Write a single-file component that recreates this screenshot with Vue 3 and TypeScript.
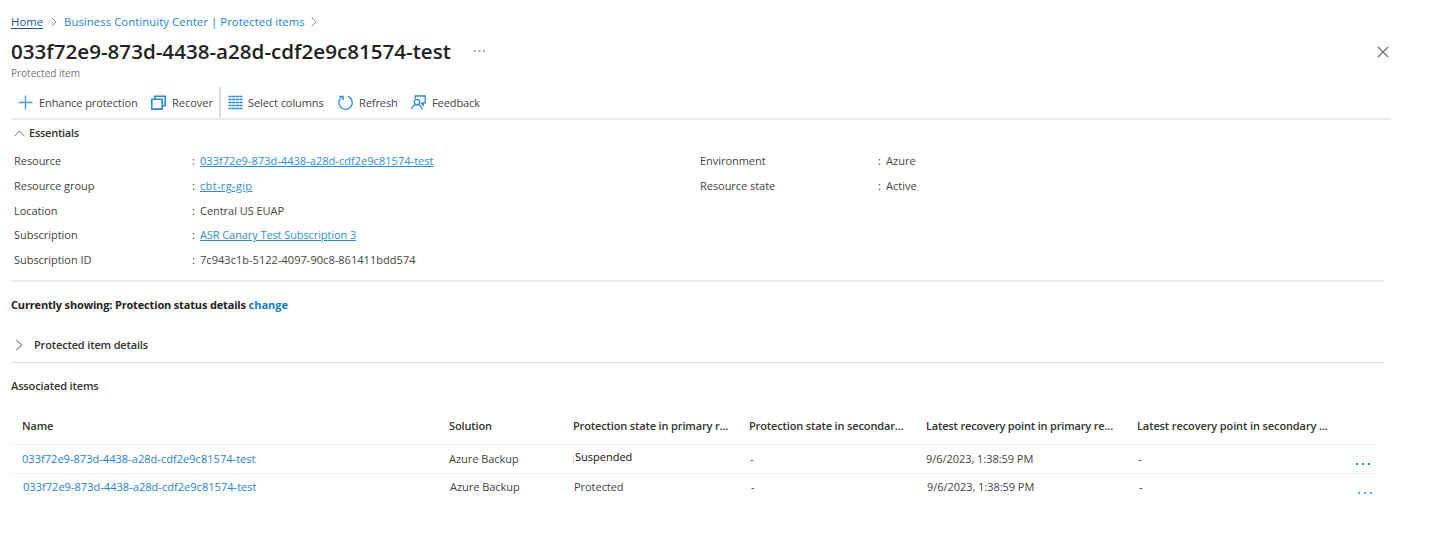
<script setup lang="ts">
interface Field {
  label: string
  value: string
  kind: string
}

interface Item {
  name: string
  solution: string
  state: string
  stateKind: string
  secondary: string
  latest: string
  latestSecondary: string
}

const resourceName = '033f72e9-873d-4438-a28d-cdf2e9c81574-test'

const leftFields: Field[] = [
  { label: 'Resource', value: resourceName, kind: 'link guid' },
  { label: 'Resource group', value: 'cbt-rg-gip', kind: 'link group' },
  { label: 'Location', value: 'Central US EUAP', kind: 'location' },
  { label: 'Subscription', value: 'ASR Canary Test Subscription 3', kind: 'link subscription' },
  { label: 'Subscription ID', value: '7c943c1b-5122-4097-90c8-861411bdd574', kind: 'guid' },
]

const rightFields: Field[] = [
  { label: 'Environment', value: 'Azure', kind: '' },
  { label: 'Resource state', value: 'Active', kind: '' },
]

const items: Item[] = [
  { name: resourceName, solution: 'Azure Backup', state: 'Suspended', stateKind: 'suspended', secondary: '-', latest: '9/6/2023, 1:38:59 PM', latestSecondary: '-' },
  { name: resourceName, solution: 'Azure Backup', state: 'Protected', stateKind: '', secondary: '-', latest: '9/6/2023, 1:38:59 PM', latestSecondary: '-' },
]
</script>

<template>
  <main class="page">
    <nav class="crumbs">
      <a class="home">Home</a>
      <svg class="sep" viewBox="0 0 6 10"><path d="M.8.8 5 5 .8 9.2" /></svg>
      <a class="crumb">Business Continuity Center | Protected items</a>
      <svg class="sep last" viewBox="0 0 6 10"><path d="M.8.8 5 5 .8 9.2" /></svg>
    </nav>

    <header class="head">
      <h1>{{ resourceName }}</h1>
      <svg class="more" viewBox="0 0 11 2"><path d="M0 0h2v2H0zM4.5 0h2v2h-2zM9 0h2v2H9z" /></svg>
      <svg class="close" viewBox="0 0 12 12"><path d="M1 1l10 10M11 1 1 11" /></svg>
    </header>
    <p class="subtitle">Protected item</p>

    <div class="toolbar">
      <button class="tool enhance">
        <svg class="icon" viewBox="0 0 15 15"><path class="plus" d="M7.5.5v14M.5 7.5h14" /></svg>
        <span>Enhance protection</span>
      </button>
      <button class="tool recover">
        <svg class="icon" viewBox="0 0 15 15"><path class="bold" d="M3.8 3.8V1.2h10.4v9.6h-2.7M.8 4.2h10.4v9.9H.8z" /></svg>
        <span>Recover</span>
      </button>
      <i class="divider"></i>
      <button class="tool columns">
        <svg class="icon" viewBox="0 0 15 15">
          <path class="rows" d="M.5 1.5h14M.5 4.5h14M.5 7.5h14M.5 10.5h14M.5 13.5h14" />
        </svg>
        <span>Select columns</span>
      </button>
      <button class="tool refresh">
        <svg class="icon" viewBox="0 0 15 15"><path d="M1.2 1.3h3.9v3.8M4.9 1.5A6.7 6.7 0 1 0 10 1.4" /></svg>
        <span>Refresh</span>
      </button>
      <button class="tool feedback">
        <svg class="icon" viewBox="0 0 15 15">
          <path d="M4.2 3.8V1h10v6.8h-1.8v2.3L9.9 7.8" />
          <circle cx="6" cy="7" r="2.7" />
          <path d="M.8 14.4c.3-3.1 2.3-4.7 5.2-4.7s4.7 1.7 5.1 4.7" />
        </svg>
        <span>Feedback</span>
      </button>
    </div>

    <section class="essentials">
      <h2><svg viewBox="0 0 11 7"><path d="M.6 6.2 5.5 1l4.9 5.2" /></svg><span>Essentials</span></h2>
      <div class="fields">
        <dl>
          <div v-for="f in leftFields" :key="f.label" class="field">
            <dt>{{ f.label }}</dt>
            <dd><i>:</i><span :class="f.kind">{{ f.value }}</span></dd>
          </div>
        </dl>
        <dl>
          <div v-for="f in rightFields" :key="f.label" class="field">
            <dt>{{ f.label }}</dt>
            <dd><i>:</i><span :class="f.kind">{{ f.value }}</span></dd>
          </div>
        </dl>
      </div>
    </section>

    <p class="showing"><span>Currently showing: Protection status details</span> <a>change</a></p>

    <div class="details">
      <svg viewBox="0 0 8 12"><path d="M1.2 1 6.6 6 1.2 11" /></svg>
      <span>Protected item details</span>
    </div>

    <h3 class="associated">Associated items</h3>

    <div class="table">
      <div class="row header">
        <span>Name</span>
        <span>Solution</span>
        <span>Protection state in primary r...</span>
        <span>Protection state in secondar...</span>
        <span class="wide">Latest recovery point in primary re...</span>
        <span class="wide last">Latest recovery point in secondary ...</span>
      </div>
      <div v-for="(item, n) in items" :key="n" class="row">
        <a class="guid">{{ item.name }}</a>
        <span>{{ item.solution }}</span>
        <span :class="item.stateKind">{{ item.state }}</span>
        <span class="dash">{{ item.secondary }}</span>
        <span class="date">{{ item.latest }}</span>
        <span class="dash">{{ item.latestSecondary }}</span>
        <svg class="dots" viewBox="0 0 14 2"><path d="M0 0h2v2H0zM6 0h2v2H6zM12 0h2v2h-2z" /></svg>
      </div>
    </div>
  </main>
</template>

<style>
body { background: #fff; }
</style>

<style scoped>
.page {
  box-sizing: border-box;
  width: 1430px;
  height: 539px;
  padding: 12px 0 0 11px;
  overflow: hidden;
  background: #fff;
  color: #444;
  font-family: "Open Sans", "Noto Sans", sans-serif;
  font-size: 11px;
  line-height: 16px;
  letter-spacing: -.04px;
  white-space: nowrap;
}
h1, h2, h3, p, dl, dd { margin: 0; }
i { font-style: normal; }
svg { flex: none; fill: none; overflow: visible; }
a { color: #1b83d8; }

.crumbs { display: flex; align-items: center; height: 20px; font-size: 11.3px; letter-spacing: .08px; }
.home { width: 33px; color: #1c5a8c; text-decoration: underline; text-underline-offset: 2px; }
.sep { width: 6px; height: 10px; margin: 0 7px; stroke: #8c8c8c; stroke-width: 1; }
.crumb { width: 240px; }

.head { display: flex; align-items: center; height: 34px; margin-top: 2px; }
h1 { width: 463px; color: #222; font-size: 20.6px; font-weight: 600; line-height: 30px; letter-spacing: 0; }
.more { width: 11px; height: 2px; fill: #aaa; }
.close { width: 12px; height: 12px; margin: 2px 0 0 892px; stroke: #707070; stroke-width: 1.3; }
.subtitle { height: 14px; margin-top: -2px; color: #777; font-size: 10px; line-height: 14px; letter-spacing: 0; }

.toolbar {
  display: flex;
  align-items: center;
  width: 1380px;
  height: 31px;
  margin-top: 7px;
  border-bottom: 2px solid #eaeaea;
}
.tool {
  display: flex;
  align-items: center;
  gap: 6px;
  box-sizing: border-box;
  padding: 0 0 0 7px;
  border: 0;
  background: none;
  color: #444;
  font: inherit;
  letter-spacing: -.08px;
}
.icon { width: 15px; height: 15px; stroke: #2b88d8; stroke-width: 1.3; }
.icon .plus { stroke: #4a9fe0; stroke-width: 1.4; }
.icon .bold { stroke-width: 1.6; }
.icon .rows { stroke-dasharray: 3.2 .4; stroke-width: 1.6; }
.enhance { width: 140px; }
.recover { width: 68px; padding-left: 0; letter-spacing: 0; }
.divider { width: 2px; height: 31px; background: #ddd; }
.columns { width: 110px; gap: 5px; }
.refresh { width: 73px; }

.essentials { width: 1373px; height: 160px; border-bottom: 2px solid #ededed; }
h2 { display: flex; align-items: center; gap: 4px; height: 26px; padding-left: 3px; color: #333; font-size: 11px; font-weight: 600; letter-spacing: -.25px; }
h2 svg { width: 11px; height: 7px; stroke: #777; }
.fields { display: grid; grid-template-columns: 686px 1fr; padding: 3px 0 0 3px; }
.field { display: grid; grid-template-columns: 178px 1fr; align-items: center; height: 24.65px; }
dd { display: flex; letter-spacing: .04px; }
dd i { width: 8px; }
.link { color: #2b8ddb; text-decoration: underline; text-underline-offset: 1px; }
.guid { letter-spacing: .04px; }
.group { letter-spacing: .35px; }
.location { letter-spacing: -.04px; }
.subscription { letter-spacing: -.09px; }

.showing { height: 46px; line-height: 46px; color: #222; font-weight: 700; letter-spacing: -.16px; }
.showing a { color: #0f7ad8; letter-spacing: -.02px; }
.details {
  display: flex;
  align-items: center;
  gap: 11px;
  box-sizing: border-box;
  width: 1373px;
  height: 35px;
  padding-left: 4px;
  border-bottom: 1px solid #ddd;
  color: #333;
  font-weight: 600;
  letter-spacing: -.15px;
}
.details svg { width: 8px; height: 12px; stroke: #555; }
.associated { height: 45px; color: #333; font-size: 11px; font-weight: 600; line-height: 45px; letter-spacing: -.13px; }

.row {
  display: grid;
  grid-template-columns: 427px 124px 176px 177px 211px 219px 1fr;
  align-items: center;
  box-sizing: border-box;
  width: 1366px;
  height: 28.5px;
  padding-left: 11px;
  border-bottom: 1px solid #f2f2f2;
}
.row.header { height: 37px; color: #333; font-weight: 600; letter-spacing: -.14px; }
.wide { letter-spacing: -.17px; }
.wide.last { letter-spacing: -.11px; }
.row:last-child { height: 28px; padding-left: 12px; border-color: #fafafa; }
.suspended {
  display: flex;
  align-items: center;
  margin-top: -4px;
  color: #111;
  letter-spacing: 0;
}
.suspended::before {
  width: 1px;
  height: 7px;
  margin: 6px 1px 0 0;
  background: #e3cdb8;
  content: "";
}
.dash { padding-left: 1px; }
.dots { width: 14px; height: 2px; margin-top: 10px; fill: #2b88d8; }
.row:last-child .dots { margin: 11px 0 0 1px; fill: #5aa8e6; }
</style>
